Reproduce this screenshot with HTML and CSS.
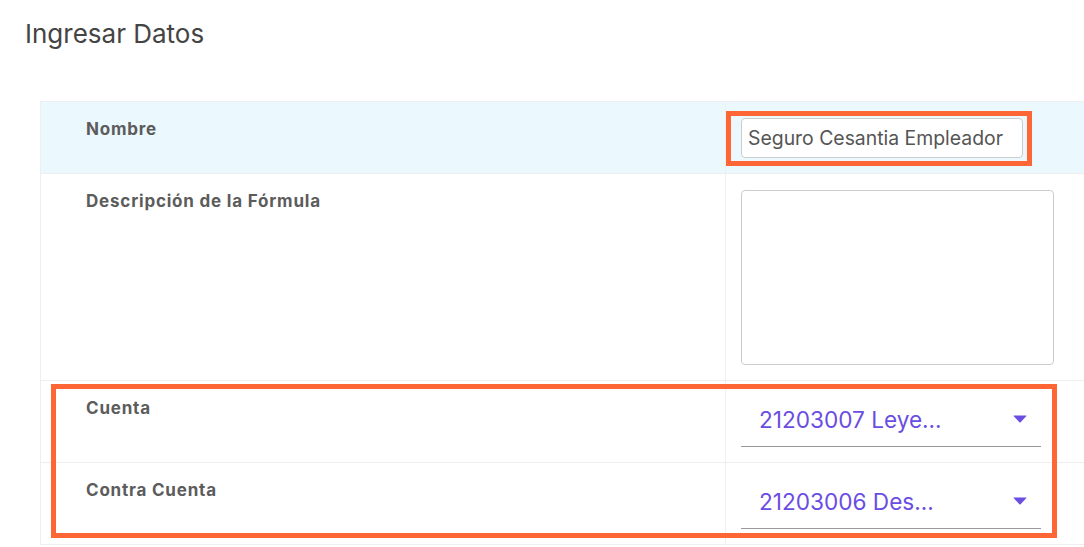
FILE: index.html
```html
<!DOCTYPE html>
<html lang="es">
<head>
    <meta charset="UTF-8">
    <meta name="viewport" content="width=device-width, initial-scale=1.0">
    <title>Ingresar Datos</title>
    <link rel="stylesheet" href="styles.css">
</head>
<body>
    <div class="page">
        <h1 class="title">Ingresar Datos</h1>

        <div class="form-table">
            <div class="row row-active">
                <div class="cell-label">Nombre</div>
                <div class="cell-field">
                    <input class="text-input" type="text" value="Seguro Cesantia Empleador">
                </div>
            </div>
            <div class="row">
                <div class="cell-label">Descripción de la Fórmula</div>
                <div class="cell-field">
                    <textarea class="text-area"></textarea>
                </div>
            </div>
            <div class="row">
                <div class="cell-label">Cuenta</div>
                <div class="cell-field">
                    <div class="select">
                        <span class="select-value">21203007 Leye...</span>
                        <svg class="select-arrow" width="14" height="8" viewBox="0 0 14 8"><path d="M1 0.5 H13 Q13.8 0.5 13.2 1.2 L7.6 7.2 Q7 7.8 6.4 7.2 L0.8 1.2 Q0.2 0.5 1 0.5 Z"/></svg>
                    </div>
                </div>
            </div>
            <div class="row">
                <div class="cell-label">Contra Cuenta</div>
                <div class="cell-field">
                    <div class="select">
                        <span class="select-value">21203006 Des...</span>
                        <svg class="select-arrow" width="14" height="8" viewBox="0 0 14 8"><path d="M1 0.5 H13 Q13.8 0.5 13.2 1.2 L7.6 7.2 Q7 7.8 6.4 7.2 L0.8 1.2 Q0.2 0.5 1 0.5 Z"/></svg>
                    </div>
                </div>
            </div>
        </div>

        <!-- highlight marks drawn over the form -->
        <div class="mark mark-name"></div>
        <div class="mark mark-accounts"></div>
    </div>
</body>
</html>
```

FILE: styles.css
```css
* {
    margin: 0;
    padding: 0;
    box-sizing: border-box;
}

body {
    font-family: 'Inter', 'Noto Sans', sans-serif;
    background: #ffffff;
    color: #333;
    overflow: hidden;
}

.page {
    position: relative;
    width: 1084px;
    height: 547px;
    overflow: hidden;
}

.title {
    font-size: 26px;
    font-weight: 400;
    color: #444;
    line-height: 30px;
    padding: 19px 0 0 25px;
    height: 101px;
}

.form-table {
    width: 1120px;
    margin-left: 40px;
    border-top: 1px solid #eeeeee;
    border-left: 1px solid #eeeeee;
}

.row {
    display: grid;
    grid-template-columns: 684px 1fr;
    border-bottom: 1px solid #eeeeee;
}

.row-active {
    background: #ebf8fd;
}

.cell-label {
    padding: 15px 0 0 45px;
    font-size: 17px;
    font-weight: 700;
    letter-spacing: 0.8px;
    line-height: 24px;
    color: #5c5c5c;
}

.cell-field {
    padding: 16px 15px 15px 15px;
    border-left: 1px solid #f0f0f0;
}

.text-input {
    display: block;
    width: 282px;
    height: 40px;
    padding: 0 6px;
    font-family: inherit;
    font-size: 19.4px;
    color: #555;
    background: #fff;
    border: 1px solid #cccccc;
    border-radius: 4px;
    outline: none;
}

.text-area {
    display: block;
    width: 313px;
    height: 175px;
    border: 1px solid #cccccc;
    border-radius: 4px;
    resize: none;
    outline: none;
    font-family: inherit;
}

.select {
    display: flex;
    align-items: center;
    justify-content: space-between;
    width: 300px;
    height: 50px;
    padding: 0 14px 5px 18px;
    border-bottom: 1px solid #999999;
}

.select-value {
    font-size: 22.6px;
    color: #6a4de2;
}

.select-arrow {
    fill: #6a4de2;
}

.mark {
    position: absolute;
    border: 5px solid #fe6635;
}

.mark-name {
    left: 726px;
    top: 111px;
    width: 306px;
    height: 55px;
}

.mark-accounts {
    left: 51px;
    top: 384px;
    width: 1006px;
    height: 154px;
}
```
